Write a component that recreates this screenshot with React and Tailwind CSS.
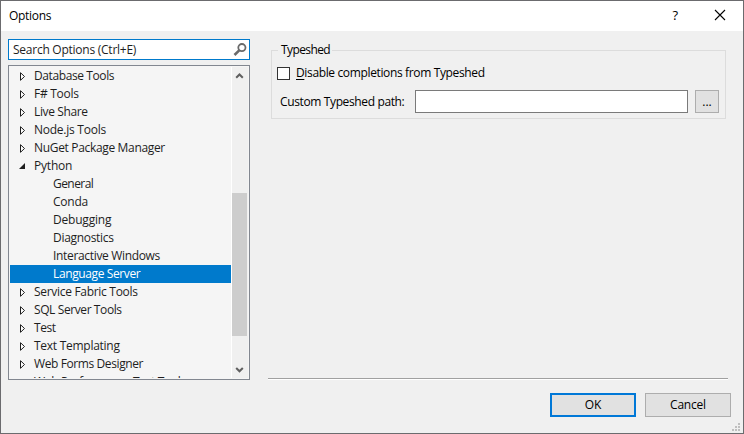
const rows = [
  { label: "Database Tools", kind: "closed", track: "tracking-[-0.4px]" },
  { label: "F# Tools", kind: "closed", track: "tracking-[-0.27px]" },
  { label: "Live Share", kind: "closed", track: "tracking-[-0.38px]" },
  { label: "Node.js Tools", kind: "closed", track: "tracking-[-0.25px]" },
  { label: "NuGet Package Manager", kind: "closed", track: "tracking-[-0.33px]" },
  { label: "Python", kind: "open", track: "tracking-[-0.2px]" },
  { label: "General", kind: "leaf", track: "tracking-[-0.55px]" },
  { label: "Conda", kind: "leaf", track: "tracking-[-0.25px]" },
  { label: "Debugging", kind: "leaf", track: "tracking-[-0.2px]" },
  { label: "Diagnostics", kind: "leaf", track: "tracking-[-0.3px]" },
  { label: "Interactive Windows", kind: "leaf", track: "tracking-[-0.33px]" },
  { label: "Language Server", kind: "leaf", selected: true, track: "tracking-[-0.38px]" },
  { label: "Service Fabric Tools", kind: "closed", track: "tracking-[-0.3px]" },
  { label: "SQL Server Tools", kind: "closed", track: "tracking-[-0.4px]" },
  { label: "Test", kind: "closed", track: "tracking-[-0.4px]" },
  { label: "Text Templating", kind: "closed", track: "tracking-[-0.27px]" },
  { label: "Web Forms Designer", kind: "closed", track: "tracking-[-0.4px]" },
  { label: "Web Performance Test Tools", kind: "cut", track: "tracking-[-0.32px]" },
];

function Expander({ kind }) {
  return (
    <svg width="8" height="10" viewBox="0 0 8 10" className="ml-[9px] mr-[7px] shrink-0">
      {kind === "closed" && <path d="M1.5 1.7v7.6L5.5 5.5z" fill="#fff" stroke="#1e1e1e" />}
      {kind === "open" && <path d="M6 2v6H0z" fill="#1e1e1e" />}
    </svg>
  );
}

function Row({ label, kind, selected, track }) {
  return (
    <div className={"flex h-[18px] shrink-0 items-center " + (selected ? "bg-[#007acc] text-white" : "text-[#1e1e1e]")}>
      <Expander kind={kind} />
      <span className={track + (kind === "leaf" ? " ml-[19px]" : "")}>{label}</span>
    </div>
  );
}

export default function App() {
  return (
    <div className="flex h-[434px] w-[744px] flex-col overflow-hidden border border-[#6b6b6e] bg-[#f0f0f0] font-['Open_Sans',sans-serif] text-[12px] leading-[18px] whitespace-nowrap text-black">
      <header className="flex h-[30px] shrink-0 items-center bg-white pl-[8px]">
        <span className="tracking-[-0.3px]">Options</span>
        <span className="mr-[36px] mb-[2px] ml-auto text-[13px] font-medium">?</span>
        <svg width="12" height="12" viewBox="0 0 12 12" className="mr-[17px] mb-[2px]">
          <path d="M1 1l10 10M11 1L1 11" stroke="#000" strokeWidth="1.1" />
        </svg>
      </header>

      <main className="flex h-[349px] shrink-0 pt-[8px] pl-[7px]">
        <section className="w-[242px] shrink-0">
          <div className="flex h-[21px] items-center border border-[#007acc] bg-white pl-[4px] text-[#1e1e1e]">
            <span className="tracking-[-0.25px]">Search Options (Ctrl+E)</span>
            <svg width="14" height="14" viewBox="0 0 14 14" className="mr-[2px] ml-auto" fill="none" stroke="#6a6a6a">
              <circle cx="8.9" cy="4.6" r="3.6" strokeWidth="1.8" />
              <path d="M6.2 7.4L1.5 12" strokeWidth="2.6" />
            </svg>
          </div>
          <div className="mt-[5px] flex h-[315px] border border-[#828790] bg-[#f5f5f5] p-px">
            <div className="flex w-[221px] flex-col overflow-hidden">
              {rows.map((r) => (
                <Row key={r.label} {...r} />
              ))}
            </div>
            <div className="flex flex-1 flex-col border-l border-white bg-[#f0f0f0]">
              <svg width="15" height="17" viewBox="0 0 15 17">
                <path d="M4.2 10.8L7.5 7.5l3.3 3.3" fill="none" stroke="#606060" strokeWidth="2" />
              </svg>
              <div className="mt-[109px] h-[143px] w-[15px] bg-[#cdcdcd]" />
              <svg width="15" height="17" viewBox="0 0 15 17" className="mt-auto">
                <path d="M4.2 7L7.5 10.3L10.8 7" fill="none" stroke="#606060" strokeWidth="2" />
              </svg>
            </div>
          </div>
        </section>

        <section className="ml-[18px] flex w-[460px] flex-col border-b border-white">
          <div className="flex h-full flex-col border-b border-[#a0a0a0] pl-[3px]">
            <fieldset className="mt-[2px] h-[78px] w-[455px] border border-[#dcdcdc] pl-[5px]">
              <legend className="ml-[1px] pr-[2px] pl-[3px] tracking-[-0.6px]">Typeshed</legend>
              <label className="mt-[5px] flex h-[18px] items-center">
                <span className="h-[13px] w-[13px] border border-[#333] bg-white" />
                <span className="ml-[6px] tracking-[-0.36px]">
                  <span className="underline underline-offset-2">D</span>isable completions from Typeshed
                </span>
              </label>
              <div className="mt-[8px] flex h-[23px] items-center">
                <span className="w-[138px] pl-[3px] tracking-[-0.37px]">Custom Typeshed path:</span>
                <span className="h-[23px] w-[273px] border border-[#7a7a7a] bg-white" />
                <button className="ml-[7px] h-[23px] w-[24px] border border-[#adadad] bg-[#e1e1e1] leading-[20px]">...</button>
              </div>
            </fieldset>
          </div>
        </section>
      </main>

      <footer className="flex flex-1 pt-[13px] pl-[549px]">
        <button className="h-[24px] w-[86px] border-2 border-[#0078d7] bg-[#e1e1e1] tracking-[-0.2px]">OK</button>
        <button className="ml-[9px] h-[24px] w-[86px] border border-[#adadad] bg-[#e1e1e1] tracking-[-0.2px]">Cancel</button>
        <svg width="8" height="8" viewBox="0 0 8 8" className="mt-auto mb-[2px] ml-[1px] shrink-0" fill="#bfbfbf">
          <path d="M6 0h2v2H6zM3 3h2v2H3zM6 3h2v2H6zM0 6h2v2H0zM3 6h2v2H3zM6 6h2v2H6z" />
        </svg>
      </footer>
    </div>
  );
}
